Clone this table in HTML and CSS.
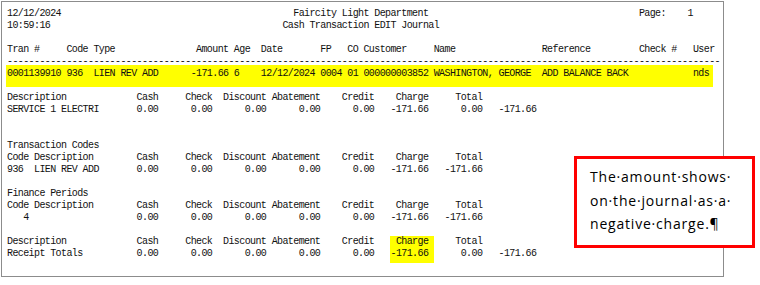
FILE: index.html
```html
<!DOCTYPE html>
<html lang="en">
<head>
    <meta charset="UTF-8">
    <title>Cash Transaction EDIT Journal</title>
    <link rel="stylesheet" href="styles.css">
</head>
<body>
    <div class="report">
<pre class="rows">12/12/2024                                           Faircity Light Department                                       Page:    1
10:59:16                                           Cash Transaction EDIT Journal

Tran #     Code Type               Amount Age  Date       FP   CO Customer     Name                Reference         Check #   User
------------------------------------------------------------------------------------------------------------------------------------</pre>
        <div class="current">
<pre class="rows">0001139910 936  LIEN REV ADD      -171.66 6    12/12/2024 0004 01 000000003852 WASHINGTON, GEORGE  ADD BALANCE BACK            nds</pre>
        </div>
<pre class="rows">

Description             Cash     Check  Discount Abatement    Credit    Charge     Total
SERVICE 1 ELECTRI       0.00      0.00      0.00      0.00      0.00   -171.66      0.00   -171.66


Transaction Codes
Code Description        Cash     Check  Discount Abatement    Credit    Charge     Total
936  LIEN REV ADD       0.00      0.00      0.00      0.00      0.00   -171.66   -171.66

Finance Periods
Code Description        Cash     Check  Discount Abatement    Credit    Charge     Total
   4                    0.00      0.00      0.00      0.00      0.00   -171.66   -171.66

Description             Cash     Check  Discount Abatement    Credit   <span class="mark"> Charge </span>    Total
Receipt Totals          0.00      0.00      0.00      0.00      0.00   <span class="mark mark-end">-171.66 </span>     0.00   -171.66</pre>
    </div>

    <div class="note">The·amount·shows·<br>on·the·journal·as·a·<br>negative·charge.¶</div>
</body>
</html>
```
FILE: styles.css
```css
body {
    margin: 0;
    background: #fff;
    color: #111;
}
.report {
    margin: 1px 0 0 1px;
    width: 716px;
    padding: 6px 0 16px 5px;
    border: 1px solid #8c8c8c;
}
.rows {
    margin: 0;
    font-family: "Liberation Mono", monospace;
    font-size: 10px;
    letter-spacing: -0.6px;
    line-height: 12px;
}
.current {
    background: #ffff00;
    width: 706px;
    margin: -3px 0 -7px -1px;
    padding: 3px 0 7px 1px;
}
.mark {
    display: inline-block;
    background: #ffff00;
}
.mark-end {
    padding-bottom: 3px;
    margin-bottom: -3px;
}
.note {
    position: absolute;
    left: 574px;
    top: 156px;
    width: 181px;
    height: 92px;
    box-sizing: border-box;
    border: 3px solid #ff0000;
    background: #fff;
    padding: 6px 0 0 13px;
    font-family: "Open Sans", sans-serif;
    font-size: 14px;
    letter-spacing: 0.8px;
    line-height: 23.5px;
    color: #000;
}
```
